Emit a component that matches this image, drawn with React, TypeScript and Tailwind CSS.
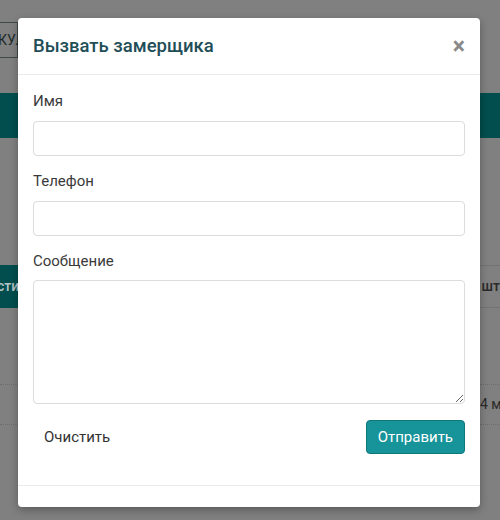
import React from 'react';

function Field({ label, children }: { label: string; children: React.ReactNode }) {
  return (
    <div className="flex flex-col">
      <label className="mb-[10px] text-[15px] leading-[20px] text-[#3a3a3a]">{label}</label>
      {children}
    </div>
  );
}

export default function App() {
  return (
    <div
      className="relative h-[520px] w-[500px] overflow-hidden bg-[#808080]"
      style={{ fontFamily: 'Roboto, "Noto Sans", sans-serif' }}
    >
      {/* dimmed page behind the modal */}
      <div className="flex flex-col">
        <div className="mt-[22px] flex h-[36px] w-[18px] items-center border-y border-r border-[#3d4a4a] text-[14px] text-[#1f2a2a]">
          <span className="-ml-[2px] whitespace-nowrap">КУЛ</span>
        </div>
        <div className="mt-[35px] h-[45px] bg-[#024e4e]" />
        <div className="mt-[127px] flex h-[43px]">
          <div className="flex w-[18px] items-center overflow-hidden bg-[#024e4e] text-[14px] font-medium text-[#b5c4c4]">
            <span className="-ml-[3px] whitespace-nowrap">сти</span>
          </div>
          <div className="flex-1" />
          <div className="flex w-[20px] items-center justify-end overflow-hidden border-y border-[#737373] text-[14px] font-medium text-[#2a2a2a]">
            <span className="whitespace-nowrap pl-[1px]">шт</span>
          </div>
        </div>
        <div className="mt-[76px] flex h-[41px]">
          <div className="w-[18px] border-y border-dotted border-[#6e6e6e]" />
          <div className="flex-1" />
          <div className="flex w-[20px] items-center overflow-hidden border-y border-dotted border-[#6e6e6e] text-[14px] text-[#2a2a2a]">
            <span className="whitespace-nowrap">4 м</span>
          </div>
        </div>
        <div className="mt-[40px] flex justify-center gap-[18px] pl-[68px]">
          <div className="h-[14px] w-[34px] rounded-[5px] border border-[#6f6f6f]" />
          <div className="h-[14px] w-[42px] rounded-[5px] bg-[#024e4e]" />
          <div className="h-[14px] w-[42px] rounded-[5px] border border-[#6f6f6f]" />
        </div>
      </div>

      {/* modal */}
      <div className="absolute left-[18px] top-[18px] flex h-[489px] w-[462px] flex-col rounded-[4px] bg-white shadow-[0_3px_9px_rgba(0,0,0,0.3)]">
        <div className="flex h-[57px] items-center justify-between border-b border-[#e9ecef] pl-[15px] pr-[15px]">
          <h4 className="text-[18.5px] font-medium leading-[22px] text-[#1f4e57]">Вызвать замерщика</h4>
          <button className="text-[23px] font-bold leading-none text-[#8a8a8a]">×</button>
        </div>
        <div className="flex flex-col gap-[15px] px-[15px] pt-[16px]">
          <Field label="Имя">
            <input className="h-[35px] rounded-[4px] border border-[#dcdcdc] bg-white px-3 outline-none" />
          </Field>
          <Field label="Телефон">
            <input className="h-[35px] rounded-[4px] border border-[#dcdcdc] bg-white px-3 outline-none" />
          </Field>
          <div className="flex flex-col">
            <label className="mb-[9px] text-[15px] leading-[20px] text-[#3a3a3a]">Сообщение</label>
            <textarea className="h-[124px] resize-y rounded-[4px] border border-[#dcdcdc] bg-white px-3 outline-none" />
          </div>
          <div className="mt-[1px] flex items-center justify-between">
            <button className="h-[34px] px-[11px] text-[15px] text-[#333]">Очистить</button>
            <button className="h-[34px] rounded-[4px] border border-[#0f767c] bg-[#17939a] px-[11px] text-[15px] text-white">
              Отправить
            </button>
          </div>
        </div>
        <div className="mt-[31px] border-b border-[#e9ecef]" />
      </div>
    </div>
  );
}
